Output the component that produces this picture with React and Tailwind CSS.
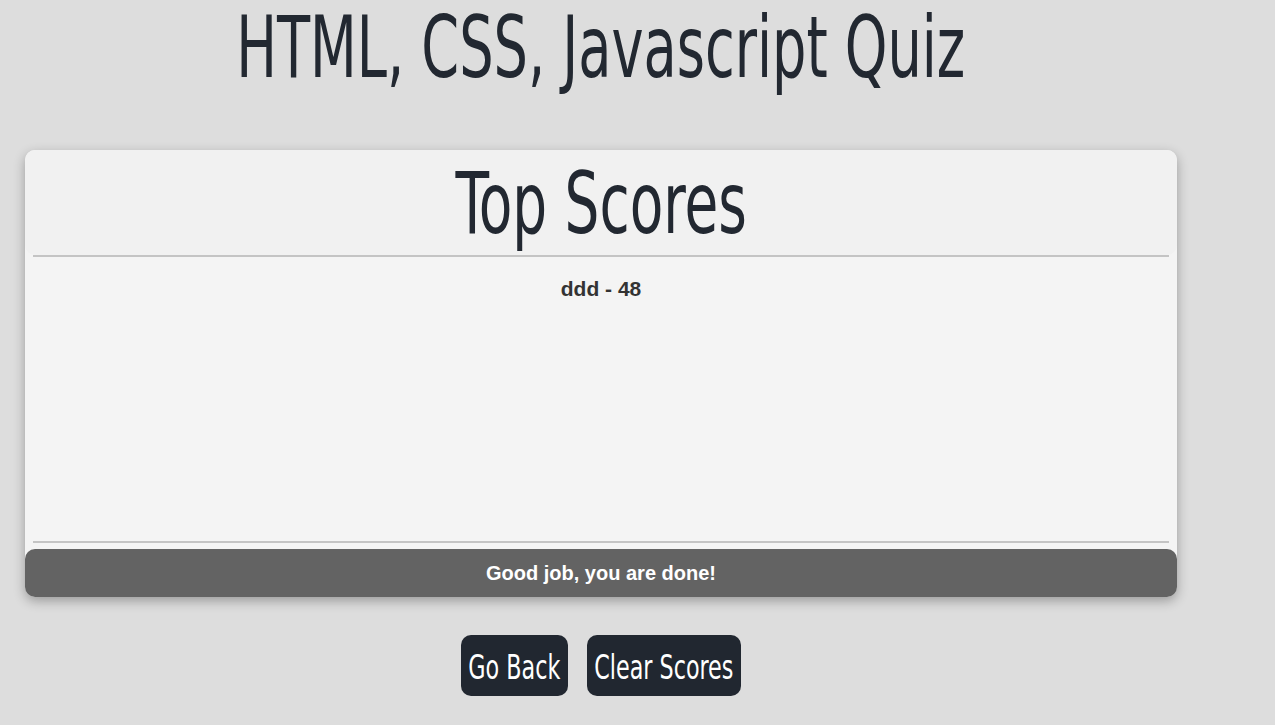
import React from "react";

// Oswald isn't installed, so a condensed face is narrowed further to match it
const condensed = "font-['DejaVu_Sans_Condensed','Liberation_Sans_Narrow',sans-serif]";

export default function App() {
  const scores = [{ name: "ddd", score: 48 }];

  return (
    <div className="min-h-[725px] w-full bg-[#dddddd] font-['Liberation_Sans',Arial,sans-serif]">
      <div className="w-[1177px] pl-[25px]">
        <h1 className={`text-center text-[86px] leading-[94px] text-[#222831] ${condensed}`}>
          <span className="inline-block whitespace-nowrap scale-x-[0.7]">HTML, CSS, Javascript Quiz</span>
        </h1>

        {/* Scores card */}
        <div className="mt-[56px] h-[447px] rounded-[10px] bg-[#f4f4f4] shadow-[0_4px_12px_rgba(0,0,0,0.3)] flex flex-col">
          <div className="h-[105px] rounded-[10px] bg-[#f1f1f1] flex items-center justify-center">
            <h2 className={`text-[86px] leading-[100px] text-[#222831] ${condensed}`}>
              <span className="inline-block whitespace-nowrap scale-x-[0.71]">Top Scores</span>
            </h2>
          </div>
          <div className="mx-[8px] h-[2px] bg-[#c4c4c4]" />
          <ul className="flex-1 pt-[16px] text-center">
            {scores.map((s) => (
              <li key={s.name} className="text-[21px] font-bold text-[#333333]">
                {s.name} - {s.score}
              </li>
            ))}
          </ul>
          <div className="mx-[8px] h-[2px] bg-[#c4c4c4]" />
          <div className="mt-[6px] h-[48px] rounded-[10px] bg-[#636363] flex items-center justify-center text-white text-[20px] font-bold">
            Good job, you are done!
          </div>
        </div>

        <div className="mt-[38px] flex justify-center gap-[19px]">
          <button className={`w-[107px] h-[61px] rounded-[10px] bg-[#212730] text-white text-[33px] flex items-center justify-center ${condensed}`}>
            <span className="inline-block whitespace-nowrap scale-x-[0.75] translate-y-[2px]">Go Back</span>
          </button>
          <button className={`w-[154px] h-[61px] rounded-[10px] bg-[#212730] text-white text-[33px] flex items-center justify-center ${condensed}`}>
            <span className="inline-block whitespace-nowrap scale-x-[0.75] translate-y-[2px]">Clear Scores</span>
          </button>
        </div>
      </div>
    </div>
  );
}
